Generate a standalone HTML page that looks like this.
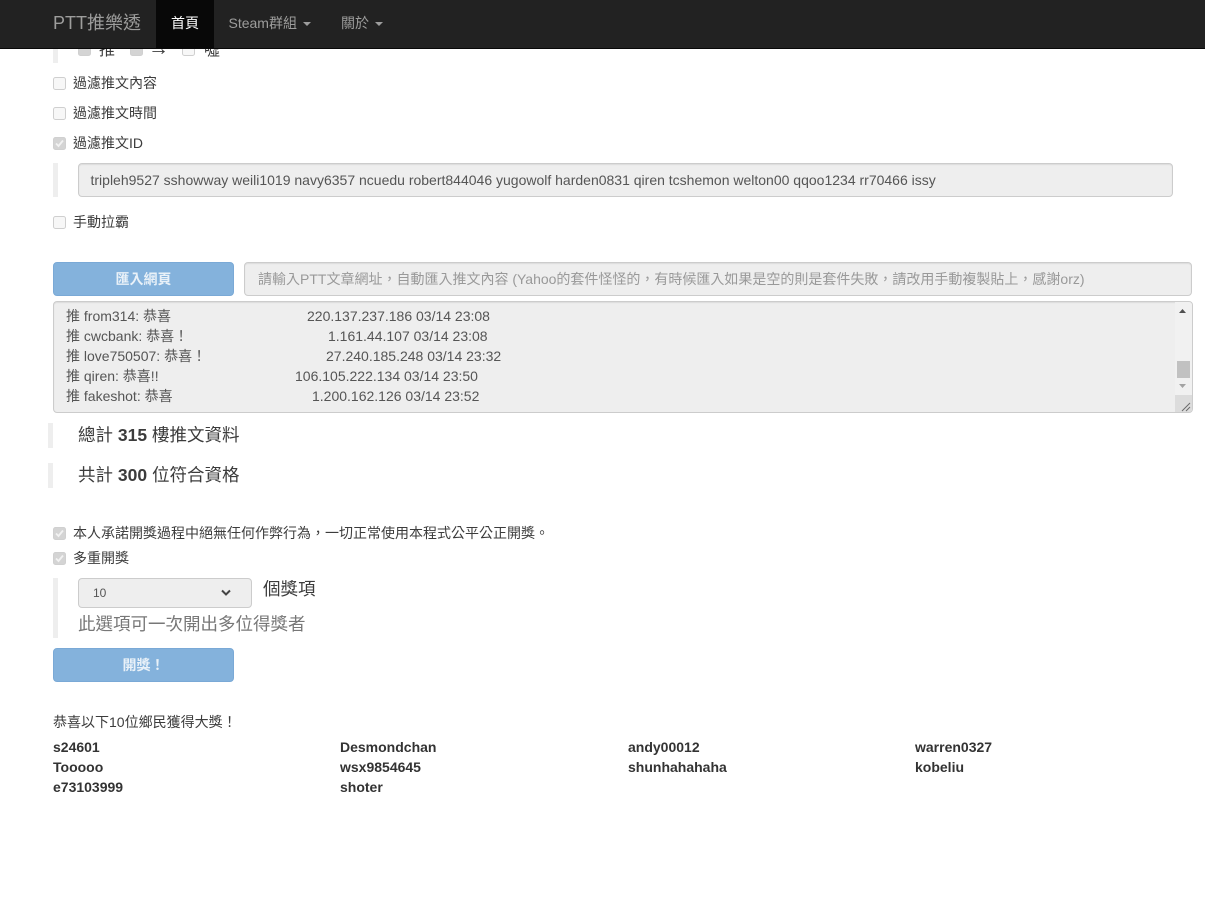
<!DOCTYPE html>
<html lang="zh-Hant">
<head>
<meta charset="utf-8">
<title>PTT推樂透</title>
<style>
html,body{margin:0;padding:0;background:#fff;}
body{width:1205px;height:900px;position:relative;overflow:hidden;font-family:"Liberation Sans","Noto Sans CJK TC",sans-serif;font-size:14px;color:#3c3c3c;}
.a{position:absolute;white-space:pre;line-height:20px;}
.nav{position:absolute;left:0;top:0;width:1205px;height:48px;background:#222;border-bottom:1px solid #080808;z-index:10;}
.nav .a{color:#9d9d9c;}
.active{position:absolute;left:156px;top:0;width:58px;height:48px;background:#080808;}
.caret{position:absolute;width:0;height:0;border-left:4px solid transparent;border-right:4px solid transparent;border-top:4px solid #9d9d9d;}
.cb{position:absolute;width:13px;height:13px;box-sizing:border-box;border:1px solid #cfcfcf;border-radius:2.5px;background:#f7f7f7;}
.cb.on{background:#d4d4d4;border-color:#d0d0d0;}
.cb svg{position:absolute;left:0;top:0;}
.bar{position:absolute;background:#eee;}
.field{position:absolute;box-sizing:border-box;background:#eee;border:1px solid #ccc;border-radius:4px;box-shadow:inset 0 1px 1px rgba(0,0,0,.075);}
.btn{position:absolute;box-sizing:border-box;background:#84b2dc;border:1px solid #7aa9d6;border-radius:4px;color:#e9f1f8;font-weight:bold;text-align:center;}
.w{font-weight:bold;color:#333;}
</style>
</head>
<body>
<div class="nav">
  <div class="a" style="left:53px;top:12px;font-size:18px;line-height:22px;">PTT推樂透</div>
  <div class="active"></div>
  <div class="a" style="left:171px;top:13px;color:#fff;">首頁</div>
  <div class="a" style="left:228.500px;top:13px;">Steam群組</div>
  <div class="caret" style="left:303px;top:22px;"></div>
  <div class="a" style="left:341px;top:13px;">關於</div>
  <div class="caret" style="left:375px;top:22px;"></div>
</div>

<div class="bar" style="left:53px;top:49px;width:5px;height:14px;"></div>
<div class="cb on" style="left:78px;top:43px;"></div>
<div class="a" style="left:99px;top:41px;font-size:16px;">推</div>
<div class="cb on" style="left:130px;top:43px;"></div>
<div class="a" style="left:148px;top:37px;font-size:21px;line-height:24px;">→</div>
<div class="cb" style="left:182px;top:43px;"></div>
<div class="a" style="left:204px;top:41px;font-size:16px;">噓</div>

<div class="cb" style="left:53px;top:77px;"></div>
<div class="a" style="left:73px;top:73px;">過濾推文內容</div>
<div class="cb" style="left:53px;top:107px;"></div>
<div class="a" style="left:73px;top:103px;">過濾推文時間</div>
<div class="cb on" style="left:53px;top:137px;"><svg width="11" height="11" viewBox="0 0 11 11"><path d="M2 5.500L4.500 8 9 2.500" fill="none" stroke="#f2f2f2" stroke-width="1.800"/></svg></div>
<div class="a" style="left:73px;top:133px;">過濾推文ID</div>

<div class="bar" style="left:53px;top:163px;width:5px;height:34px;"></div>
<div class="field" style="left:78px;top:163px;width:1095px;height:34px;"></div>
<div class="a" style="left:90.500px;top:170px;color:#555;">tripleh9527 sshowway weili1019 navy6357 ncuedu robert844046 yugowolf harden0831 qiren tcshemon welton00 qqoo1234 rr70466 issy</div>

<div class="cb" style="left:53px;top:216px;"></div>
<div class="a" style="left:73px;top:212px;">手動拉霸</div>

<div class="btn" style="left:53px;top:262px;width:181px;height:34px;line-height:32px;font-size:14px;">匯入網頁</div>
<div class="field" style="left:244px;top:262px;width:948px;height:34px;"></div>
<div class="a" style="left:258px;top:269px;color:#999;">請輸入PTT文章網址，自動匯入推文內容 (Yahoo的套件怪怪的，有時候匯入如果是空的則是套件失敗，請改用手動複製貼上，感謝orz)</div>

<div class="field" style="left:53px;top:301px;width:1140px;height:112px;overflow:hidden;">
  <div style="position:absolute;right:0;top:0;width:17px;height:110px;background:#f1f1f1;"></div>
  <div style="position:absolute;right:2px;top:59px;width:13px;height:17px;background:#c1c1c1;"></div>
  <svg style="position:absolute;right:0;top:0;" width="17" height="110" viewBox="0 0 17 110">
    <path d="M4 11L7.500 7 11 11Z" fill="#505050"/>
    <path d="M4 82L7.500 86 11 82Z" fill="#a3a3a3"/>
    <rect x="0" y="93" width="17" height="17" fill="#dcdcdc"/>
    <path d="M7 109L15 101M11 109L15 105" stroke="#6a6a6a" stroke-width="1" fill="none"/>
  </svg>
</div>
<div class="a" style="left:66px;top:306px;color:#555;">推 from314: 恭喜</div>
<div class="a" style="left:307px;top:306px;color:#555;">220.137.237.186 03/14 23:08</div>
<div class="a" style="left:66px;top:326px;color:#555;">推 cwcbank: 恭喜！</div>
<div class="a" style="left:328px;top:326px;color:#555;">1.161.44.107 03/14 23:08</div>
<div class="a" style="left:66px;top:346px;color:#555;">推 love750507: 恭喜！</div>
<div class="a" style="left:326px;top:346px;color:#555;">27.240.185.248 03/14 23:32</div>
<div class="a" style="left:66px;top:366px;color:#555;">推 qiren: 恭喜!!</div>
<div class="a" style="left:295px;top:366px;color:#555;">106.105.222.134 03/14 23:50</div>
<div class="a" style="left:66px;top:386px;color:#555;">推 fakeshot: 恭喜</div>
<div class="a" style="left:312px;top:386px;color:#555;">1.200.162.126 03/14 23:52</div>

<div class="bar" style="left:48px;top:423px;width:5px;height:25px;"></div>
<div class="a" style="left:78px;top:423px;font-size:17.500px;line-height:24px;">總計 <b>315</b> 樓推文資料</div>
<div class="bar" style="left:48px;top:463px;width:5px;height:25px;"></div>
<div class="a" style="left:78px;top:463px;font-size:17.500px;line-height:24px;">共計 <b>300</b> 位符合資格</div>

<div class="cb on" style="left:53px;top:527px;"><svg width="11" height="11" viewBox="0 0 11 11"><path d="M2 5.500L4.500 8 9 2.500" fill="none" stroke="#f2f2f2" stroke-width="1.800"/></svg></div>
<div class="a" style="left:73px;top:523px;">本人承諾開獎過程中絕無任何作弊行為，一切正常使用本程式公平公正開獎。</div>
<div class="cb on" style="left:53px;top:552px;"><svg width="11" height="11" viewBox="0 0 11 11"><path d="M2 5.500L4.500 8 9 2.500" fill="none" stroke="#f2f2f2" stroke-width="1.800"/></svg></div>
<div class="a" style="left:73px;top:548px;">多重開獎</div>

<div class="bar" style="left:53px;top:578px;width:5px;height:60px;"></div>
<div class="field" style="left:78px;top:578px;width:174px;height:30px;box-shadow:none;"></div>
<div class="a" style="left:93px;top:583px;font-size:12px;color:#555;">10</div>
<svg style="position:absolute;left:220px;top:589px;" width="12" height="8" viewBox="0 0 12 8"><path d="M2 1.500L6 5.500 10 1.500" fill="none" stroke="#444" stroke-width="2"/></svg>
<div class="a" style="left:263px;top:577px;font-size:17.500px;line-height:24px;">個獎項</div>
<div class="a" style="left:78px;top:612px;font-size:17.500px;line-height:24px;color:#777;">此選項可一次開出多位得獎者</div>

<div class="btn" style="left:53px;top:648px;width:181px;height:34px;line-height:32px;font-size:14px;">開獎！</div>

<div class="a" style="left:53px;top:712px;">恭喜以下10位鄉民獲得大獎！</div>

<div class="a w" style="left:53px;top:737px;">s24601</div>
<div class="a w" style="left:340px;top:737px;">Desmondchan</div>
<div class="a w" style="left:628px;top:737px;">andy00012</div>
<div class="a w" style="left:915px;top:737px;">warren0327</div>
<div class="a w" style="left:53px;top:757px;">Tooooo</div>
<div class="a w" style="left:340px;top:757px;">wsx9854645</div>
<div class="a w" style="left:628px;top:757px;">shunhahahaha</div>
<div class="a w" style="left:915px;top:757px;">kobeliu</div>
<div class="a w" style="left:53px;top:777px;">e73103999</div>
<div class="a w" style="left:340px;top:777px;">shoter</div>
</body>
</html>
